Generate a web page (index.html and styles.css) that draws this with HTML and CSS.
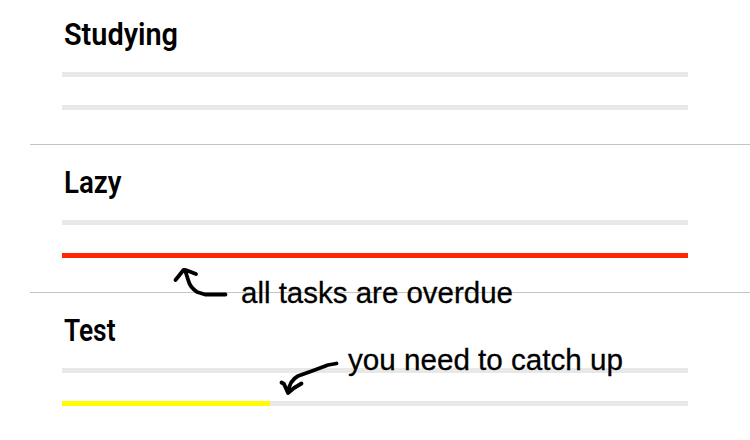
FILE: index.html
```
<!DOCTYPE html>
<html lang="en">
<head>
<meta charset="utf-8">
<title>Tasks</title>
<link rel="stylesheet" href="styles.css">
</head>
<body>
<main class="board">
  <section class="group">
    <svg class="title" width="200" height="44"><text x="2" y="32" textLength="114" lengthAdjust="spacingAndGlyphs">Studying</text></svg>
    <div class="bars"><div class="bar"></div><div class="bar"></div></div>
  </section>
  <section class="group">
    <svg class="title" width="200" height="44"><text x="2" y="32" textLength="57.500" lengthAdjust="spacingAndGlyphs">Lazy</text></svg>
    <div class="bars"><div class="bar"></div><div class="bar"><div class="fill overdue"></div></div></div>
  </section>
  <section class="group">
    <svg class="title" width="200" height="44"><text x="2" y="32" textLength="51.500" lengthAdjust="spacingAndGlyphs">Test</text></svg>
    <div class="bars"><div class="bar"></div><div class="bar"><div class="fill behind"></div></div></div>
  </section>
</main>
<svg class="notes" width="750" height="440" viewBox="0 0 750 440">
  <path d="M225.500 294.500H205L197 292Q190 287 188.500 281L185 270M175.500 280L183.500 270L187 270.500L196 274"/>
  <path d="M336.500 363.500L328 365L312 371L298 376Q289 381 288.500 392M281.500 382.500L284 384L288 393L294 388L301.500 383.500"/>
  <text x="241" y="303" textLength="272" lengthAdjust="spacingAndGlyphs">all tasks are overdue</text>
  <text x="348" y="370" textLength="275" lengthAdjust="spacingAndGlyphs">you need to catch up</text>
</svg>
</body>
</html>
```
FILE: styles.css
```
body {
  margin: 0;
  background: #fff;
  overflow: hidden;
}
.board {
  height: 440px;
  overflow: hidden;
  display: flex;
  flex-direction: column;
}
.group {
  box-sizing: border-box;
  flex: none;
  height: 148px;
  margin-left: 30px;
  padding: 16px 62px 0 32px;
  border-bottom: 1px solid #c4c4c4;
}
.group:first-child {
  height: 145px;
  padding-top: 13px;
}
.title {
  display: block;
  margin-bottom: 15px;
  overflow: visible;
  font: 600 32px Roboto, sans-serif;
}
.bars {
  display: flex;
  flex-direction: column;
  gap: 28px;
}
.bar {
  height: 5px;
  background: #e8e8e8;
}
.fill {
  height: 5px;
}
.overdue {
  background: #ff2600;
}
.behind {
  width: 208px;
  background: #fffb00;
}
.notes {
  position: absolute;
  left: 0;
  top: 0;
  font: 30px "Liberation Sans", Arial, sans-serif;
}
.notes text {
  stroke: #000;
  stroke-width: 0.3px;
}
.notes path {
  fill: none;
  stroke: #000;
  stroke-width: 3.8;
  stroke-linecap: round;
  stroke-linejoin: round;
}
```
